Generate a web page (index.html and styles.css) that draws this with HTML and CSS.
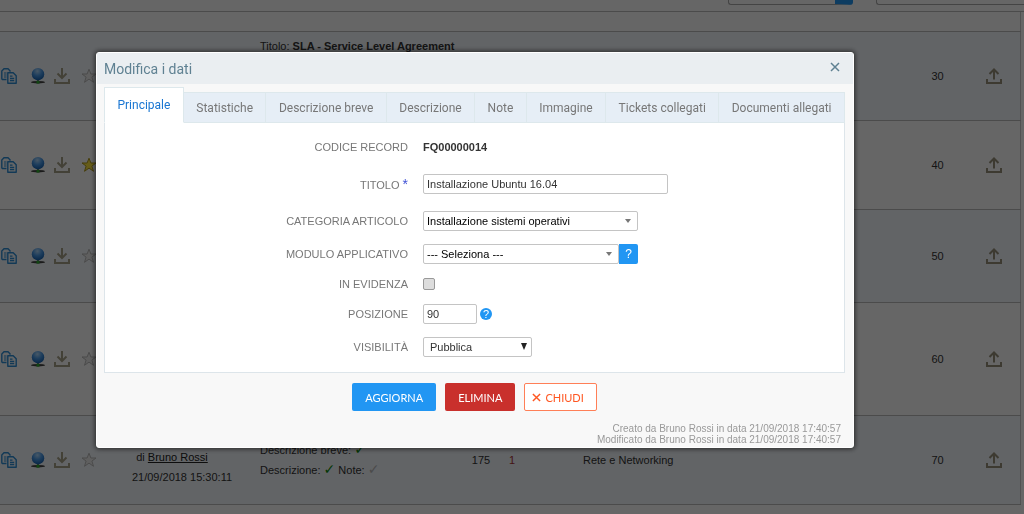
FILE: index.html
```html
<!DOCTYPE html>
<html lang="it">
<head>
  <meta charset="UTF-8">
  <meta name="viewport" content="width=device-width, initial-scale=1.0">
  <title>Modifica i dati</title>
  <link rel="stylesheet" href="styles.css">
</head>
<body>
  <!-- Shared icons -->
  <svg class="sprite" aria-hidden="true">
    <defs>
      <radialGradient id="globe-fill" cx="45%" cy="25%" r="75%">
        <stop offset="0" stop-color="#b4dcff"/>
        <stop offset="0.5" stop-color="#4a9ae8"/>
        <stop offset="1" stop-color="#1560b0"/>
      </radialGradient>
    </defs>
    <symbol id="copy" viewBox="0 0 16 16">
      <path d="M5.500 11.500H1.800a1 1 0 0 1-1-1V3L3 .8h4l2 2v1" fill="none" stroke="#2f8fd8" stroke-width="1.4"/>
      <path d="M3 5h2.5M3 7h2.5M3 9h2.5" stroke="#2f8fd8" stroke-width="1.2"/>
      <path d="M6.8 4.800h5.400l3 3v7.400H6.800z" fill="none" stroke="#2f8fd8" stroke-width="1.4" stroke-linejoin="round"/>
      <path d="M9 8.2h2.500M9 10.500h4.200M9 12.700h4.200" stroke="#2f8fd8" stroke-width="1.3"/>
    </symbol>
    <symbol id="globe" viewBox="0 0 16 16">
      <ellipse cx="8" cy="14.2" rx="7" ry="1.2" fill="#444"/>
      <path d="M8 11v3" stroke="#777" stroke-width="2"/>
      <circle cx="8" cy="6.2" r="6.2" fill="url(#globe-fill)"/>
      <rect x="6.5" y="12.8" width="3" height="2.8" fill="#2fae2f"/>
    </symbol>
    <symbol id="download" viewBox="0 0 16 16">
      <path d="M8 0v9.500M3.500 5.500 8 10l4.500-4.500M1 11v4h14v-4" fill="none" stroke="#a8a28a" stroke-width="2"/>
    </symbol>
    <symbol id="upload" viewBox="0 0 16 16">
      <path d="M8 11.500V2M3.500 6 8 1.500 12.500 6M1 11v4h14v-4" fill="none" stroke="#98927c" stroke-width="2"/>
    </symbol>
    <symbol id="star" viewBox="0 0 16 16">
      <path d="M8 1.200 9.900 6h5.100l-4.100 3.100 1.600 5.200L8 11.100l-4.500 3.200 1.600-5.200L1 6h5.100z"/>
    </symbol>
  </svg>

  <div class="toolbar">
    <div class="filter filter-help"></div>
    <div class="filter"></div>
  </div>

  <table class="articles">
    <colgroup>
      <col class="col-actions"><col class="col-author"><col class="col-text"><col class="col-views">
      <col class="col-votes"><col><col class="col-position"><col class="col-upload">
    </colgroup>
    <tbody>
      <tr class="spacer"><td colspan="8"></td></tr>
      <tr class="row alt">
        <td><div class="actions"><svg><use href="#copy"/></svg><svg><use href="#globe"/></svg><svg><use href="#download"/></svg><svg class="star"><use href="#star"/></svg></div></td>
        <td><b>FQ00000017</b><br><br><br></td>
        <td class="text">Titolo: <b>SLA - Service Level Agreement</b></td>
        <td></td><td></td><td></td>
        <td>30</td>
        <td><svg><use href="#upload"/></svg></td>
      </tr>
      <tr class="row">
        <td><div class="actions"><svg><use href="#copy"/></svg><svg><use href="#globe"/></svg><svg><use href="#download"/></svg><svg class="star on"><use href="#star"/></svg></div></td>
        <td></td><td></td><td></td><td></td><td></td>
        <td>40</td>
        <td><svg><use href="#upload"/></svg></td>
      </tr>
      <tr class="row tall alt">
        <td><div class="actions"><svg><use href="#copy"/></svg><svg><use href="#globe"/></svg><svg><use href="#download"/></svg><svg class="star"><use href="#star"/></svg></div></td>
        <td></td><td></td><td></td><td></td><td></td>
        <td>50</td>
        <td><svg><use href="#upload"/></svg></td>
      </tr>
      <tr class="row taller">
        <td><div class="actions"><svg><use href="#copy"/></svg><svg><use href="#globe"/></svg><svg><use href="#download"/></svg><svg class="star"><use href="#star"/></svg></div></td>
        <td></td><td></td><td></td><td></td><td></td>
        <td>60</td>
        <td><svg><use href="#upload"/></svg></td>
      </tr>
      <tr class="row alt">
        <td><div class="actions"><svg><use href="#copy"/></svg><svg><use href="#globe"/></svg><svg><use href="#download"/></svg><svg class="star"><use href="#star"/></svg></div></td>
        <td class="author"><br>di <a href="#">Bruno Rossi</a><br>21/09/2018 15:30:11</td>
        <td class="text"><br>Descrizione breve: <span class="check">✓</span><br>Descrizione: <span class="check">✓</span> Note: <span class="check off">✓</span></td>
        <td>175</td>
        <td class="votes">1</td>
        <td class="category">Rete e Networking</td>
        <td>70</td>
        <td><svg><use href="#upload"/></svg></td>
      </tr>
    </tbody>
  </table>

  <!-- Edit dialog -->
  <div class="overlay">
    <form class="modal" role="dialog" aria-labelledby="modal-title">
      <div class="modal-header">
        <h1 id="modal-title">Modifica i dati</h1>
        <button type="button" class="close-btn" aria-label="Chiudi">
          <svg viewBox="0 0 10 10"><path d="M1 1l8 8M9 1 1 9" fill="none" stroke="#5f8192" stroke-width="1.5"/></svg>
        </button>
      </div>

      <div class="modal-body">
        <div class="tabs" role="tablist">
          <button type="button" role="tab" class="tab active" aria-selected="true">Principale</button>
          <button type="button" role="tab" class="tab">Statistiche</button>
          <button type="button" role="tab" class="tab">Descrizione breve</button>
          <button type="button" role="tab" class="tab">Descrizione</button>
          <button type="button" role="tab" class="tab">Note</button>
          <button type="button" role="tab" class="tab">Immagine</button>
          <button type="button" role="tab" class="tab">Tickets collegati</button>
          <button type="button" role="tab" class="tab">Documenti allegati</button>
        </div>

        <div class="panel">
          <div class="field record">
            <span class="label">CODICE RECORD</span>
            <b>FQ00000014</b>
          </div>
          <div class="field roomy">
            <label for="title">TITOLO <span class="required">*</span></label>
            <input type="text" id="title" class="title-input" value="Installazione Ubuntu 16.04">
          </div>
          <div class="field">
            <label for="category">CATEGORIA ARTICOLO</label>
            <div class="combo">
              <select id="category"><option>Installazione sistemi operativi</option></select>
            </div>
          </div>
          <div class="field">
            <label for="module">MODULO APPLICATIVO</label>
            <div class="combo-group">
              <div class="combo">
                <select id="module"><option>--- Seleziona ---</option></select>
              </div>
              <button type="button" class="help-btn">?</button>
            </div>
          </div>
          <div class="field">
            <label for="featured">IN EVIDENZA</label>
            <input type="checkbox" id="featured">
          </div>
          <div class="field">
            <label for="position">POSIZIONE</label>
            <div class="position-group">
              <input type="text" id="position" class="position-input" value="90">
              <button type="button" class="help-dot">?</button>
            </div>
          </div>
          <div class="field">
            <label for="visibility">VISIBILITÀ</label>
            <div class="combo visibility">
              <select id="visibility"><option>Pubblica</option></select>
            </div>
          </div>
        </div>

        <div class="buttons">
          <button type="submit" class="btn update">AGGIORNA</button>
          <button type="button" class="btn delete">ELIMINA</button>
          <button type="button" class="btn cancel">
            <svg viewBox="0 0 10 10"><path d="M1 1l8 8M9 1 1 9" fill="none" stroke="#ff5722" stroke-width="1.6"/></svg>CHIUDI
          </button>
        </div>

        <p class="history">Creato da Bruno Rossi in data 21/09/2018 17:40:57<br>Modificato da Bruno Rossi in data 21/09/2018 17:40:57</p>
      </div>
    </form>
  </div>
</body>
</html>
```

FILE: styles.css
```css
* {
  box-sizing: border-box;
}

body {
  margin: 0;
  background-color: #fff;
  font-family: "Liberation Sans", Arial, sans-serif;
  font-size: 11px;
  color: #333;
}

input, select, button {
  font: inherit;
  color: inherit;
  margin: 0;
}

.sprite {
  display: block;
  width: 0;
  height: 0;
}

/* Page behind the dialog */
.toolbar {
  display: flex;
  justify-content: flex-end;
  gap: 23px;
  height: 12px;
  border-bottom: 1px solid #bbb;
}

.filter {
  width: 148px;
  height: 5px;
  border: 1px solid #aaa;
  border-top: 0;
  border-right: 0;
  border-radius: 0 0 0 3px;
}

.filter-help {
  width: 125px;
  border-right: 18px solid #2196f3;
  border-radius: 0 0 3px 3px;
}

.articles {
  width: calc(100% - 3px);
  border-collapse: collapse;
  table-layout: fixed;
  border-right: 1px solid #ccc;
}

.articles td {
  padding: 0;
  border-bottom: 1px solid #bcbcbc;
  text-align: center;
  line-height: 20px;
}

.col-actions { width: 104px; }
.col-author { width: 156px; }
.col-text { width: 204px; }
.col-views { width: 34px; }
.col-votes { width: 28px; }
.col-position { width: 62px; }
.col-upload { width: 52px; }

.spacer { height: 19px; }
.row { height: 89px; }
.tall { height: 93px; }
.taller { height: 113px; }

.alt {
  background-color: #f5faff;
}

.articles svg {
  display: block;
  width: 16px;
  height: 16px;
  margin: 0 auto;
}

.actions {
  display: flex;
  gap: 8px;
}

.actions svg {
  margin: 0;
}

.actions svg:nth-child(1) { margin: 0 5px 0 1px; }
.actions svg:nth-child(4) { margin-left: 3px; }

.star {
  fill: #eee;
  stroke: #bbb;
}

.star.on {
  fill: #ffe640;
  stroke: #b09a20;
}

.articles .author {
  padding-bottom: 6px;
}

.articles .text {
  vertical-align: top;
  padding: 4px 0 0;
  text-align: left;
}

.articles .category {
  padding-left: 57px;
  text-align: left;
}

.articles a {
  margin-right: 20px;
  color: #222;
}

.check {
  color: #0a8a0a;
  font-family: "DejaVu Sans", sans-serif;
  font-size: 14px;
  line-height: 1;
}

.check.off {
  color: #bbb;
}

.articles .votes {
  color: #a33;
}

/* Dialog */
.overlay {
  position: fixed;
  inset: 0;
  padding: 52px 170px 0 96px;
  background-color: rgba(0, 0, 0, 0.6);
}

.modal {
  background-color: #f8f8f8;
  border: 1px solid #fff;
  border-radius: 3px;
  box-shadow: 0 0 5px 1px rgba(0, 0, 0, 0.6);
}

.modal-header {
  display: flex;
  justify-content: space-between;
  align-items: center;
  height: 31px;
  padding: 0 13px 0 7px;
  background-color: #eaeef1;
}

.modal-header h1 {
  margin: 0;
  font-family: Roboto, sans-serif;
  font-size: 14px;
  font-weight: normal;
  color: #5f8192;
}

.close-btn {
  padding: 0;
  border: 0;
  background: none;
  cursor: pointer;
}

.close-btn svg {
  display: block;
  width: 10px;
  height: 10px;
  margin-bottom: 4px;
}

.modal-body {
  padding: 3px 8px 2px 7px;
}

.tabs {
  display: flex;
  align-items: flex-end;
}

.tab {
  flex: 1 1 auto;
  height: 31px;
  padding: 0;
  border: 1px solid #dde8ec;
  border-left: 0;
  background-color: #e6eef6;
  font-family: Roboto, sans-serif;
  font-size: 12px;
  color: #777;
  white-space: nowrap;
  cursor: pointer;
}

.tab.active {
  height: 36px;
  border-left: 1px solid #dde8ec;
  border-bottom-color: #fff;
  background-color: #fff;
  color: #1976d2;
}

.panel {
  display: flex;
  flex-direction: column;
  gap: 13px;
  padding: 17px 0 15px;
  border: 1px solid #dde5ea;
  border-top: 0;
  background-color: #fff;
}

.field {
  display: grid;
  grid-template-columns: 41% 1fr;
  column-gap: 15px;
  align-items: center;
  justify-items: start;
}

.record {
  padding-bottom: 7px;
}

.roomy {
  padding-bottom: 4px;
}

.label, .field label {
  justify-self: end;
  color: #777;
  line-height: 14px;
}

.required {
  color: #3f51d5;
  font-size: 14px;
  line-height: 1;
}

.field input[type="text"] {
  height: 20px;
  padding: 0 3px;
  border: 1px solid #c4c4c4;
  border-radius: 2px;
  background-color: #fff;
}

.field .title-input {
  width: 245px;
}

.field .position-input {
  width: 54px;
}

.field input[type="checkbox"] {
  appearance: none;
  width: 12px;
  height: 12px;
  border: 1px solid #999;
  border-radius: 2px;
  background-color: #ddd;
}

.combo {
  position: relative;
  width: 215px;
}

.combo select {
  appearance: none;
  display: block;
  width: 100%;
  height: 20px;
  padding: 0 3px;
  border: 1px solid #c4c4c4;
  border-radius: 2px;
  background-color: #fff;
  color: #000;
}

.combo::after {
  content: "";
  position: absolute;
  top: 8px;
  right: 7px;
  border: 3px solid transparent;
  border-top: 4px solid #777;
  border-bottom: 0;
  pointer-events: none;
}

.combo-group {
  display: flex;
}

.combo-group .combo {
  width: 196px;
}

.help-btn {
  width: 19px;
  height: 20px;
  padding: 0;
  border: 0;
  border-radius: 0 2px 2px 0;
  background-color: #2196f3;
  color: #fff;
  font-size: 12px;
}

.position-group {
  display: flex;
  align-items: center;
  gap: 3px;
}

.help-dot {
  width: 12px;
  height: 12px;
  padding: 0;
  border: 0;
  border-radius: 50%;
  background-color: #2196f3;
  color: #fff;
  font-size: 11px;
  line-height: 12px;
}

.combo.visibility {
  width: 109px;
}

.visibility select {
  padding-left: 6px;
  color: #333;
}

.visibility::after {
  top: 6px;
  right: 5px;
  border-width: 7px 3px 0;
  border-top-color: #222;
}

.buttons {
  display: flex;
  justify-content: center;
  gap: 9px;
  padding: 10px 0 12px;
}

.btn {
  height: 28px;
  padding: 0 12px;
  border: 1px solid transparent;
  border-radius: 2px;
  font-family: Lato, sans-serif;
  font-size: 11px;
  color: #fff;
  cursor: pointer;
}

.update {
  background-color: #2196f3;
}

.delete {
  background-color: #c9302c;
}

.cancel {
  display: flex;
  align-items: center;
  gap: 4px;
  padding-left: 7px;
  background-color: #fff;
  border-color: #ff7f57;
  color: #ff5722;
}

.cancel svg {
  width: 9px;
  height: 9px;
}

.history {
  margin: 0;
  padding-right: 4px;
  font-size: 10px;
  line-height: 11px;
  text-align: right;
  color: #999;
}
```
